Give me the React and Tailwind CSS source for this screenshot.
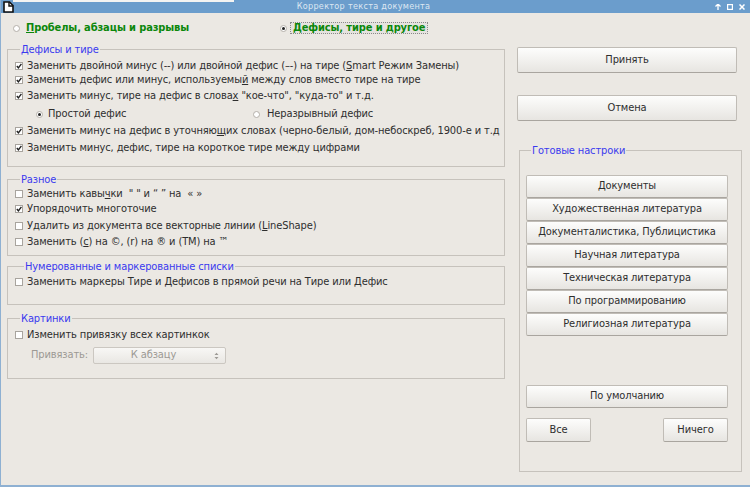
import React from 'react';

const font = { fontFamily: '"DejaVu Sans Condensed", "DejaVu Sans", "Noto Sans", sans-serif' };

function Check({ on }) {
  return (
    <span className="w-[8px] h-[8px] shrink-0 border border-[#a8a49e] bg-white flex items-center justify-center">
      {on && (
        <svg width="6" height="6" viewBox="0 0 6 6">
          <path d="M0.8 3 L2.4 4.8 L5.4 0.8" stroke="#222" strokeWidth="1.4" fill="none" />
        </svg>
      )}
    </span>
  );
}

function Radio({ on }) {
  return (
    <span className="w-[7px] h-[7px] shrink-0 rounded-full border border-[#b4b0aa] bg-white flex items-center justify-center">
      {on && <span className="w-[3px] h-[3px] rounded-full bg-[#222]" />}
    </span>
  );
}

function CheckRow({ on, children, className = '' }) {
  return (
    <div className={`h-[14px] flex items-center gap-[4px] whitespace-nowrap ${className}`}>
      <Check on={on} />
      <span>{children}</span>
    </div>
  );
}

function Group({ title, className = '', legendClass = 'ml-[5px]', children }) {
  return (
    <fieldset className={`border border-[#c6c2bc] ${className}`}>
      <legend className={`leading-[13px] text-[#3a3aef] px-[1px] ${legendClass}`}>{title}</legend>
      {children}
    </fieldset>
  );
}

function Btn({ children, className = '' }) {
  return (
    <div
      className={`flex items-center justify-center border border-[#c0bcb6] border-b-[#a9a59f] rounded-[2px] bg-gradient-to-b from-[#fdfdfc] to-[#e7e5e1] text-[#2e2e2e] whitespace-nowrap ${className}`}
    >
      {children}
    </div>
  );
}

const presets = [
  'Документы',
  'Художественная литература',
  'Документалистика, Публицистика',
  'Научная литература',
  'Техническая литература',
  'По программированию',
  'Религиозная литература',
];

export default function App() {
  return (
    <div
      style={font}
      className="w-[750px] h-[487px] bg-[#ebe8e3] border-l border-b-2 border-[#8eb0d2] flex flex-col text-[11px] tracking-[-0.12px] text-[#2e2e2e] overflow-hidden font-stretch-condensed"
    >
      {/* Title bar */}
      <div className="relative h-[13px] shrink-0 bg-[#6b9dcc] flex items-center justify-center pr-[24px]">
        <div className="absolute left-[12px] top-0 w-[221px] h-[2px] bg-[#f4f4f2]" />
        <svg className="absolute left-[2px] top-[1px]" width="11" height="12" viewBox="0 0 11 12">
          <path d="M1 1 H6.5 L10 4.5 V11 H1 Z" fill="#fff" stroke="#111" strokeWidth="1.6" />
          <path d="M6 1 V5 H10" fill="none" stroke="#111" strokeWidth="1.4" />
        </svg>
        <span className="text-[9px] leading-[13px] tracking-[0.3px] text-[#dde7f2]">Корректор текста документа</span>
        <div className="absolute right-[5px] top-0 h-[13px] flex items-center gap-[6px] text-white">
          <svg width="6" height="6" viewBox="0 0 6 6">
            <path d="M3 0 V6 M0.5 2.5 L3 0 L5.5 2.5" stroke="#fff" strokeWidth="1.3" fill="none" />
          </svg>
          <svg width="6" height="6" viewBox="0 0 6 6">
            <rect x="0.6" y="0.6" width="4.8" height="4.8" stroke="#fff" strokeWidth="1.2" fill="none" />
          </svg>
          <svg width="6" height="6" viewBox="0 0 6 6">
            <path d="M0.5 0.5 L5.5 5.5 M5.5 0.5 L0.5 5.5" stroke="#fff" strokeWidth="1.5" />
          </svg>
        </div>
      </div>

      {/* Top tabs as radios */}
      <div className="mt-[7px] h-[16px] flex items-center pl-[12px] font-bold text-[#0b870b]">
        <span className="w-[267px] flex items-center">
          <Radio />
          <span className="ml-[6px]">
            <span className="underline">П</span>робелы, абзацы и разрывы
          </span>
        </span>
        <Radio on />
        <span className="ml-[3px] px-[2px] h-[12px] flex items-center border border-dotted border-[#8a8a8a] bg-[#e5e3df]">
          Дефисы, тире и другое
        </span>
      </div>

      <div className="flex mt-[7px] pl-[6px]">
        {/* Left column */}
        <div className="w-[498px] flex flex-col">
          <Group title="Дефисы и тире" className="h-[124px] pl-[7px] pt-[3px]">
            <CheckRow on>
              Заменить двойной минус (--) или двойной дефис (–-) на тире (<span className="underline">S</span>mart Режим Замены)
            </CheckRow>
            <CheckRow on>
              Заменить дефис или минус, используемы<span className="underline">й</span> между слов вместо тире на тире
            </CheckRow>
            <CheckRow on className="mt-[2px]">
              Заменить минус, тире на дефис в слова<span className="underline">х</span> "кое-что", "куда-то" и т.д.
            </CheckRow>
            <div className="mt-[4px] h-[14px] flex items-center whitespace-nowrap">
              <span className="ml-[21px] w-[217px] flex items-center">
                <Radio on />
                <span className="ml-[5px]">Простой дефис</span>
              </span>
              <Radio />
              <span className="ml-[7px]">Неразрывный дефис</span>
            </div>
            <CheckRow on className="mt-[3px] overflow-hidden">
              Заменить минус на дефис в уточняю<span className="underline">щ</span>их словах (черно-белый, дом-небоскреб, 1900-е и т.д
            </CheckRow>
            <CheckRow on className="mt-[3px]">
              Заменить минус, дефис, тире на короткое тире между цифрами
            </CheckRow>
          </Group>

          <Group title="Разное" className="mt-[6px] h-[83px] pl-[7px] pt-[1px]">
            <CheckRow>
              Заменить кавы<span className="underline">ч</span>ки &nbsp;" " и “ ” на &nbsp;« »
            </CheckRow>
            <CheckRow on className="mt-[1px]">Упорядочить многоточие</CheckRow>
            <CheckRow className="mt-[3px]">
              Удалить из документа все векторные линии (<span className="underline">L</span>ineShape)
            </CheckRow>
            <CheckRow className="mt-[2px]">
              Заменить (<span className="underline">c</span>) на ©, (r) на ® и (TM) на ™
            </CheckRow>
          </Group>

          <Group
            title="Нумерованные и маркерованные списки"
            legendClass="ml-[9px] px-[1px]"
            className="mt-[4px] h-[45px] pl-[7px] pt-[2px]"
          >
            <CheckRow>Заменить маркеры Тире и Дефисов в прямой речи на Тире или Дефис</CheckRow>
          </Group>

          <Group title="Картинки" className="mt-[7px] h-[67px] pl-[7px] pt-[3px]">
            <CheckRow>Изменить привязку всех картинкок</CheckRow>
            <div className="mt-[5px] flex items-center">
              <span className="ml-[16px] w-[62px] text-[#9c9994]">Привязать:</span>
              <div className="relative w-[133px] h-[17px] border border-[#cbc7c1] rounded-[2px] bg-gradient-to-b from-[#f8f7f5] to-[#e9e7e3] flex items-center justify-center pr-[12px] text-[#9c9994]">
                К абзацу
                <svg className="absolute right-[6px] top-[4px]" width="5" height="8" viewBox="0 0 5 8">
                  <path d="M0.5 3 L2.5 0.8 L4.5 3 Z M0.5 5 L2.5 7.2 L4.5 5 Z" fill="#9c9994" />
                </svg>
              </div>
            </div>
          </Group>
        </div>

        {/* Right column */}
        <div className="ml-[11px] w-[226px] flex flex-col">
          <Btn className="mt-[4px] ml-[1px] w-[220px] h-[26px]">Принять</Btn>
          <Btn className="mt-[22px] ml-[1px] w-[220px] h-[26px]">Отмена</Btn>

          <Group title="Готовые настроки" className="mt-[23px] ml-[3px] w-[223px] h-[328px] pl-[6px] pt-[18px]">
            <div className="flex flex-col w-[202px]">
              {presets.map((p) => (
                <Btn key={p} className="h-[23px]">{p}</Btn>
              ))}
            </div>
            <Btn className="mt-[49px] w-[202px] h-[23px]">По умолчанию</Btn>
            <div className="mt-[10px] w-[202px] flex justify-between">
              <Btn className="w-[65px] h-[24px]">Все</Btn>
              <Btn className="w-[65px] h-[24px]">Ничего</Btn>
            </div>
          </Group>
        </div>
      </div>
    </div>
  );
}
